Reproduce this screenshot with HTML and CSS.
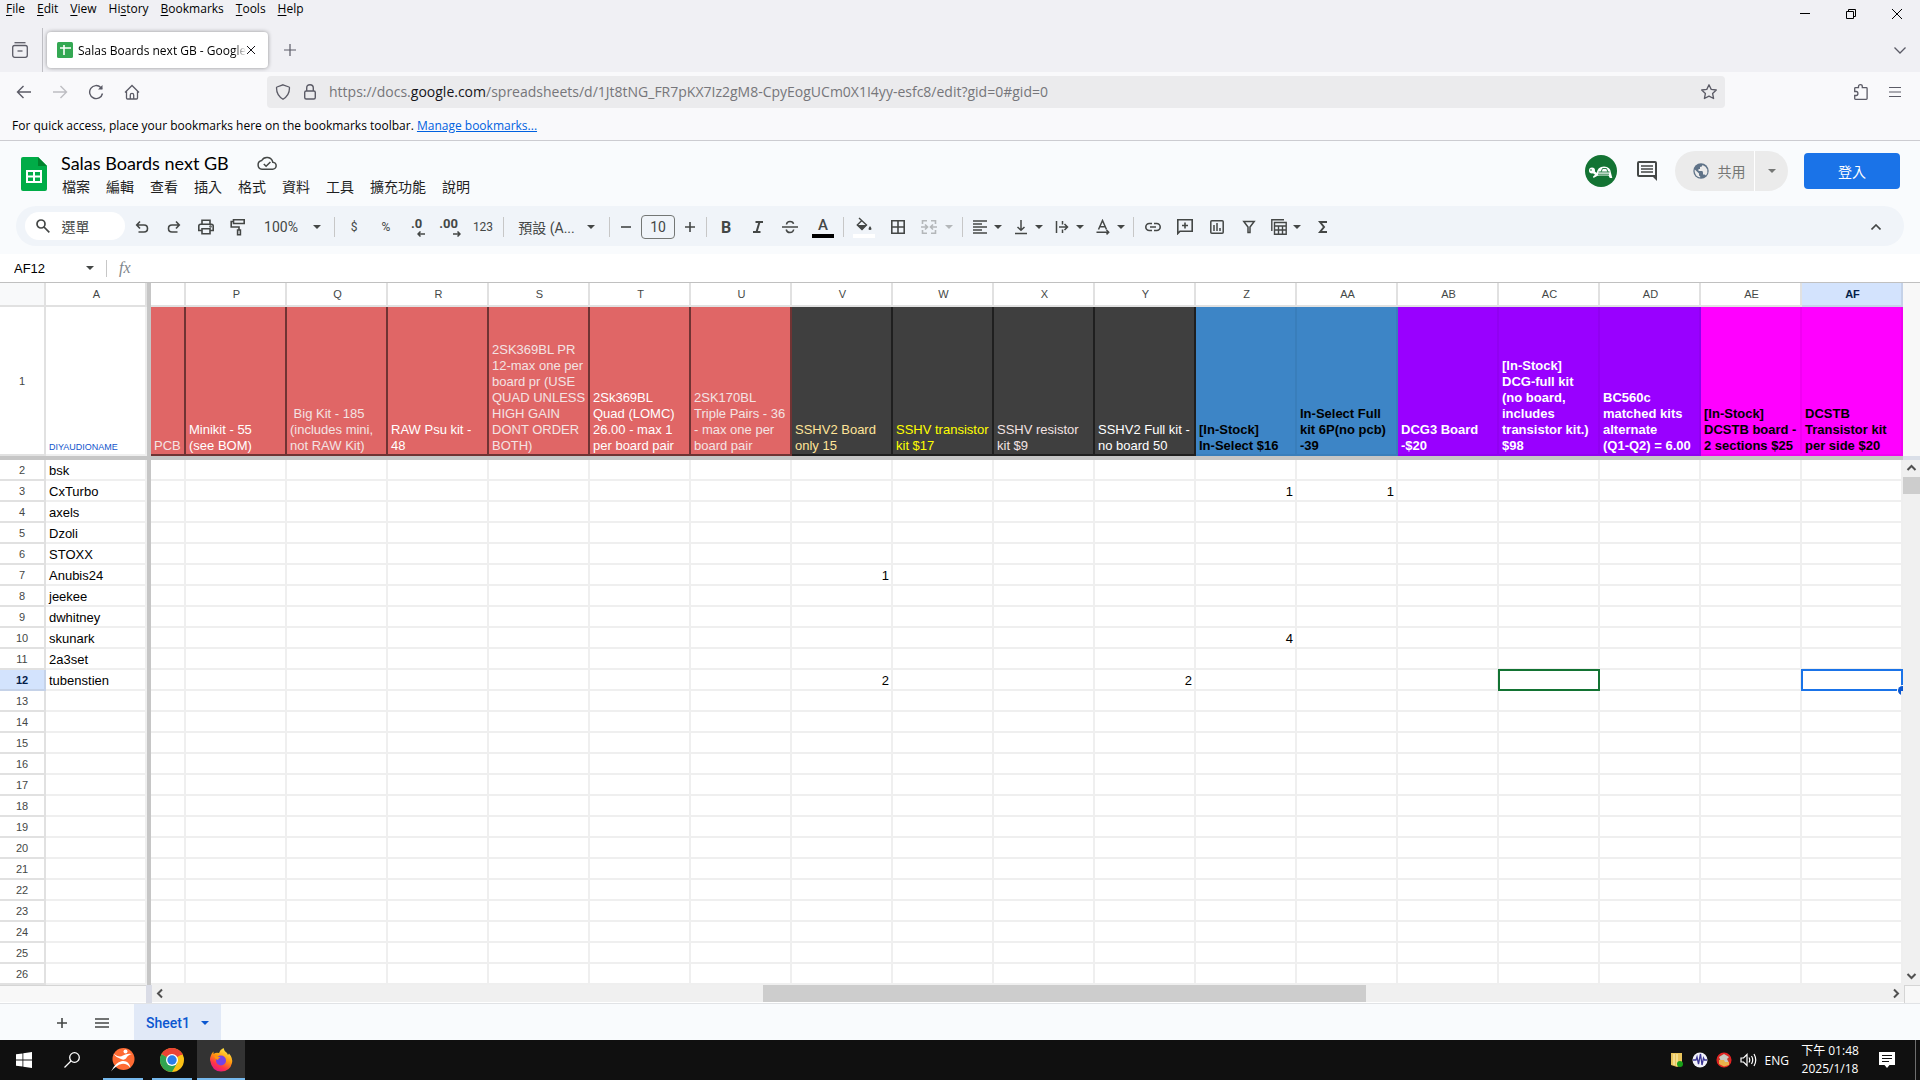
FILE: index.html
```
<!DOCTYPE html>
<html lang="zh-Hant">
<head>
  <meta charset="UTF-8" />
  <meta name="viewport" content="width=device-width, initial-scale=1.0" />
  <title>Salas Boards next GB - Google Sheets</title>
  <link rel="stylesheet" href="styles.css">
</head>
<body>
  <!-- browser chrome -->
  <div class="menubar">
    <button><u>F</u>ile</button>
    <button><u>E</u>dit</button>
    <button><u>V</u>iew</button>
    <button>Hi<u>s</u>tory</button>
    <button><u>B</u>ookmarks</button>
    <button><u>T</u>ools</button>
    <button><u>H</u>elp</button>
    <div class="window-buttons">
      <button aria-label="Minimize"><svg width="10" height="10" viewBox="0 0 10 10"><path d="M0 4.5h10" stroke="#000"/></svg></button>
      <button aria-label="Restore"><svg width="10" height="10" viewBox="0 0 10 10" fill="none" stroke="#000"><path d="M.5 2.5h7v7h-7zM2.5 2.500V.5h7v7h-2"/></svg></button>
      <button aria-label="Close"><svg width="10" height="10" viewBox="0 0 10 10"><path d="M0 0l10 10M10 0L0 10" stroke="#000"/></svg></button>
    </div>
  </div>

  <div class="tabstrip">
    <button class="recent" aria-label="View recent browsing"><svg width="16" height="16" viewBox="0 0 16 16" fill="none" stroke="#5b5b66" stroke-width="1.300"><path d="M2.500 .7h11"/><rect x=".7" y="3.500" width="14.600" height="11.800" rx="2"/><path d="M5.500 9h5"/></svg></button>
    <div class="browser-tab">
      <svg width="16" height="16" viewBox="0 0 16 16"><rect width="16" height="16" rx="1.500" fill="#34a853"/><path d="M3 6h11M7 3v10" stroke="#fff" stroke-width="1.600"/></svg>
      <span class="tab-title">Salas Boards next GB - Google</span>
      <button aria-label="Close tab"><svg width="8" height="8" viewBox="0 0 8 8"><path d="M0 0l8 8M8 0L0 8" stroke="#15141a"/></svg></button>
    </div>
    <button class="new-tab" aria-label="New tab"><svg width="12" height="12" viewBox="0 0 12 12"><path d="M6 0v12M0 6h12" stroke="#5b5b66" stroke-width="1.200"/></svg></button>
    <button class="all-tabs" aria-label="List all tabs"><svg width="12" height="7" viewBox="0 0 12 7" fill="none" stroke="#5b5b66" stroke-width="1.300"><path d="M.5.5L6 6 11.500.5"/></svg></button>
  </div>

  <div class="navbar">
    <button aria-label="Back"><svg width="16" height="16" viewBox="0 0 16 16" fill="none" stroke="#5b5b66" stroke-width="1.400"><path d="M15 8H1.500M7.500 2L1.500 8l6 6"/></svg></button>
    <button aria-label="Forward" disabled><svg width="16" height="16" viewBox="0 0 16 16" fill="none" stroke="#bdbdc2" stroke-width="1.400"><path d="M1 8h13.500M8.500 2l6 6-6 6"/></svg></button>
    <button aria-label="Reload"><svg width="16" height="16" viewBox="0 0 16 16" fill="none" stroke="#5b5b66" stroke-width="1.400"><path d="M14.500 9.500A6.500 6.500 0 1 1 12.800 3.500L14 4.700"/><path d="M14.500 1v4.500H10z" fill="#5b5b66" stroke="none"/></svg></button>
    <button aria-label="Home"><svg width="16" height="16" viewBox="0 0 16 16" fill="none" stroke="#5b5b66" stroke-width="1.300"><path d="M1 8.500L8 1.500l7 7M2.500 7.500V14q0 1 1 1h9q1 0 1-1V7.500M6.300 15v-4q0-1.700 1.700-1.700T9.700 11v4"/></svg></button>
    <div class="urlbar">
      <svg width="16" height="16" viewBox="0 0 16 16" fill="none" stroke="#5b5b66" stroke-width="1.300"><path d="M8 .8L14 3q.5.200.5.800Q14.500 11.500 8 15.200 1.500 11.500 1.500 3.800 1.500 3.200 2 3z"/></svg>
      <svg width="16" height="16" viewBox="0 0 16 16" fill="none" stroke="#5b5b66" stroke-width="1.400"><rect x="2.700" y="7" width="10.600" height="8" rx="1.500"/><path d="M4.700 7V4q0-3.300 3.300-3.300T11.300 4v3"/></svg>
      <div class="url" role="textbox" aria-label="Address">https://docs.<b>google.com</b>/spreadsheets/d/1Jt8tNG_FR7pKX7Iz2gM8-CpyEogUCm0X1I4yy-esfc8/edit?gid=0#gid=0</div>
      <svg width="16" height="16" viewBox="0 0 16 16" fill="none" stroke="#5b5b66" stroke-width="1.300" stroke-linejoin="round"><path d="M8 .8l2.200 4.600 5.100.6-3.700 3.500 1 5L8 12.100l-4.600 2.400 1-5L.7 6l5.100-.6z"/></svg>
    </div>
    <div class="nav-right">
      <button aria-label="Extensions"><svg width="16" height="16" viewBox="0 0 16 16" fill="none" stroke="#5b5b66" stroke-width="1.300"><path d="M1.700 7.500V4.500q0-.8.800-.8h3V2.500q0-1.800 1.900-1.800t1.900 1.800v1.200h4q.8 0 .8.800v10q0 .8-.8.800H2.500q-.8 0-.8-.8v-3h1.500q1.700 0 1.700-2t-1.700-2z"/></svg></button>
      <button aria-label="Open application menu"><svg width="12" height="10" viewBox="0 0 12 10" stroke="#5b5b66"><path d="M0 .5h12M0 5h12M0 9.500h12"/></svg></button>
    </div>
  </div>

  <div class="bookmarks">For quick access, place your bookmarks here on the bookmarks toolbar. <a href="#">Manage bookmarks...</a></div>

  <!-- document header -->
  <header class="doc-header">
    <svg class="doc-logo" width="26" height="36" viewBox="0 0 26 36"><path d="M2 1h15l9 9v23q0 2-2 2H2q-2 0-2-2V3q0-2 2-2z" fill="#00ac47"/><path d="M17 1l9 9h-9z" fill="#00832d"/><path d="M5 14h16v13H5zM7 16v3.500h5V16zm7 0v3.500h5V16zm-7 5.500V25h5v-3.500zm7 0V25h5v-3.500z" fill="#fff" fill-rule="evenodd"/></svg>
    <div class="doc-info">
      <div class="doc-title">
        <h1>Salas Boards next GB</h1>
        <svg width="20" height="16" viewBox="0 0 20 16" fill="none" stroke="#444746" stroke-width="1.500"><path d="M5 14.200h10.500a3.500 3.500 0 0 0 .3-7A6 6 0 0 0 4.700 5.500 4.400 4.400 0 0 0 5 14.200z"/><path d="M6.800 9l2.300 2.300 4.300-4.300"/></svg>
      </div>
      <nav class="doc-menu">
        <button>檔案</button><button>編輯</button><button>查看</button><button>插入</button><button>格式</button><button>資料</button><button>工具</button><button>擴充功能</button><button>說明</button>
      </nav>
    </div>
    <div class="doc-actions">
      <svg width="32" height="32" viewBox="0 0 32 32"><circle cx="16" cy="16" r="16" fill="#137333"/><circle cx="7" cy="15.500" r="3" fill="#fff"/><path d="M8 16.500l3 2.500h3" fill="none" stroke="#fff" stroke-width="2.400"/><path d="M11.500 18.500q1-7 7.500-7t7 6.500l1.300 5h-2.500L23.500 20.500H13L8.500 23l-.5-1.500z" fill="#fff"/><path d="M13.500 17h11M16 17l1.500-3.500h4L23 17M13 19.200h11" fill="none" stroke="#137333" stroke-width=".9"/><circle cx="6" cy="15" r=".8" fill="#137333"/></svg>
      <button class="comment" aria-label="Comments"><svg width="20" height="20" viewBox="0 0 20 20"><path d="M2 0h16q2 0 2 2v18l-4-4H2q-2 0-2-2V2q0-2 2-2zm0 2v12h16V2z" fill="#444746" fill-rule="evenodd"/><path d="M4 5h12M4 8h12M4 11h12" stroke="#444746" stroke-width="1.600"/></svg></button>
      <div class="share">
        <button class="share-main"><svg width="16" height="16" viewBox="0 0 16 16"><circle cx="8" cy="8" r="7.700" fill="#5f7388"/><path d="M9.500 2q0 2-2.500 2v2H5.500v2H9q1 0 1 2v1.500h1.500L13 12.500Q15 10 14.300 6.500 13 3 9.500 2zM1.800 6.500L6 10.500v1.500q0 1 1.200 1.200v1.300Q2 13.500 1.600 8z" fill="#ebebeb"/></svg>共用</button>
        <button class="share-more" aria-label="Share options"><i class="caret"></i></button>
      </div>
      <button class="signin">登入</button>
    </div>
  </header>

  <div class="toolbar-row">
    <div class="toolbar">
      <button class="search"><svg width="14" height="14" viewBox="0 0 14 14" fill="none" stroke="#444746" stroke-width="1.700"><circle cx="5" cy="5" r="4"/><path d="M8 8l5.300 5.300"/></svg>選單</button>
      <button class="tool" aria-label="Undo"><svg width="18" height="18" viewBox="0 0 18 18" fill="none" stroke="#444746" stroke-width="1.600"><path d="M7 3.500L3.700 7 7 10.500M4 7h7q3.500 0 3.500 3.500T11 14H5.500"/></svg></button>
      <button class="tool" aria-label="Redo"><svg width="18" height="18" viewBox="0 0 18 18" fill="none" stroke="#444746" stroke-width="1.600"><path d="M11 3.500L14.300 7 11 10.500M14 7H7q-3.500 0-3.500 3.500T7 14h5.500"/></svg></button>
      <button class="tool" aria-label="Print"><svg width="18" height="18" viewBox="0 0 18 18" fill="none" stroke="#444746" stroke-width="1.600"><path d="M5 6V2.300h8V6M5 12.500H1.800V8q0-1.800 1.800-1.800h10.800q1.800 0 1.800 1.800v4.500H13M5 10.800h8v5H5z"/><circle cx="13.500" cy="8.500" r=".5"/></svg></button>
      <button class="tool" aria-label="Paint format"><svg width="18" height="18" viewBox="0 0 18 18" fill="none" stroke="#444746" stroke-width="1.600"><path d="M4.500 1.800h10.700v3.700H4.500zM4.500 3.500H2.200V9H10v3M8.600 12h2.800v4.700H8.600z"/></svg></button>
      <button class="tool zoom">100%<i class="caret"></i></button>
      <span class="sep"></span>
      <button class="tool small">$</button>
      <button class="tool small">%</button>
      <button class="tool" aria-label="Decrease decimal places"><span class="dec">.0</span><svg class="dec-arrow" width="8" height="6" viewBox="0 0 8 6" fill="none" stroke="#444746" stroke-width="1.500"><path d="M8 3H1M3.500.5L1 3l2.500 2.500"/></svg></button>
      <button class="tool" aria-label="Increase decimal places"><span class="dec">.00</span><svg class="dec-arrow" width="8" height="6" viewBox="0 0 8 6" fill="none" stroke="#444746" stroke-width="1.500"><path d="M0 3h7M4.500.5L7 3 4.500 5.500"/></svg></button>
      <button class="tool wide small">123</button>
      <span class="sep"></span>
      <button class="tool font">預設 (A...<i class="caret"></i></button>
      <span class="sep"></span>
      <button class="tool step" aria-label="Decrease font size"><svg width="10" height="10" viewBox="0 0 10 10"><path d="M0 5h10" stroke="#444746" stroke-width="1.600"/></svg></button>
      <input class="font-size" type="text" value="10" aria-label="Font size">
      <button class="tool step" aria-label="Increase font size"><svg width="10" height="10" viewBox="0 0 10 10"><path d="M0 5h10M5 0v10" stroke="#444746" stroke-width="1.600"/></svg></button>
      <span class="sep"></span>
      <button class="tool bold">B</button>
      <button class="tool" aria-label="Italic"><svg width="12" height="12" viewBox="0 0 12 12"><path d="M3.500 1H11M1 11h7.500M7.500 1l-3 10" stroke="#444746" stroke-width="2"/></svg></button>
      <button class="tool" aria-label="Strikethrough"><svg width="16" height="16" viewBox="0 0 16 16" fill="none" stroke="#444746" stroke-width="1.500"><path d="M0 8h16M4.500 5.500Q4.800 2.500 8 2.500t3.500 2.300M4.200 10.500Q4.800 13.500 8 13.500t3.700-3"/></svg></button>
      <button class="tool wide" aria-label="Text color"><span class="swatch black">A</span></button>
      <span class="sep"></span>
      <button class="tool wide" aria-label="Fill color"><span class="swatch white"><svg width="16" height="15" viewBox="0 0 16 15"><path d="M3 1l7.500 7-4.500 4.500L1.300 8l4.500-4.500" fill="none" stroke="#444746" stroke-width="1.400"/><path d="M1.500 8h9L6 12.500zM14 9q3 4 0 4t0-4z" fill="#444746"/></svg></span></button>
      <button class="tool wide" aria-label="Borders"><svg width="14" height="14" viewBox="0 0 14 14" fill="none" stroke="#444746" stroke-width="1.600"><path d="M.8.8h12.400v12.400H.8zM7 .8v12.400M.8 7h12.400"/></svg></button>
      <button class="tool split faded" aria-label="Merge cells"><svg width="16" height="16" viewBox="0 0 16 16" fill="none" stroke="#b4b7ba" stroke-width="1.600"><path d="M6 1.800H1.500V5M10 1.800h4.500V5M6 14.200H1.500V11M10 14.200h4.500V11M0 8h6M4 5.500L6.500 8 4 10.500M16 8h-6M12 5.500L9.500 8l2.500 2.500"/></svg><i class="caret"></i></button>
      <span class="sep"></span>
      <button class="tool split" aria-label="Horizontal align"><svg width="16" height="16" viewBox="0 0 16 16" stroke="#444746" stroke-width="1.500"><path d="M1 2h14M1 5h9M1 8h14M1 11h9M1 14h14"/></svg><i class="caret"></i></button>
      <button class="tool split" aria-label="Vertical align"><svg width="16" height="16" viewBox="0 0 16 16" fill="none" stroke="#444746" stroke-width="1.500"><path d="M2 14.500h12M8 1v10M4.500 8L8 11.300 11.500 8"/></svg><i class="caret"></i></button>
      <button class="tool split" aria-label="Text wrapping"><svg width="16" height="16" viewBox="0 0 16 16" fill="none" stroke="#444746" stroke-width="1.500"><path d="M2.500 2v12M8.500 2v3.500M8.500 10.500V14M5 8h8M10.500 5l3 3-3 3"/></svg><i class="caret"></i></button>
      <button class="tool split" aria-label="Text rotation"><svg width="16" height="16" viewBox="0 0 16 16" fill="none" stroke="#444746" stroke-width="1.500"><path d="M3.500 10.500L7.500 1.500l4 9M5 7.800h5M1.500 13.200h12M11.500 11l2.200 2.200L11.500 15.400"/></svg><i class="caret"></i></button>
      <span class="sep"></span>
      <button class="tool" aria-label="Insert link"><svg width="16" height="16" viewBox="0 0 16 16" fill="none" stroke="#444746" stroke-width="1.600"><path d="M7 4.500H4.300a3.500 3.500 0 0 0 0 7H7M9 4.500h2.700a3.500 3.500 0 0 1 0 7H9M5 8h6"/></svg></button>
      <button class="tool" aria-label="Insert comment"><svg width="16" height="16" viewBox="0 0 16 16" fill="none" stroke="#444746" stroke-width="1.600"><path d="M.8 14.500V.8h14.400v11.400H3zM8 3.500v6M5 6.500h6"/></svg></button>
      <button class="tool" aria-label="Insert chart"><svg width="14" height="14" viewBox="0 0 14 14" fill="none" stroke="#444746" stroke-width="1.500"><rect x=".8" y=".8" width="12.400" height="12.400" rx="1"/><path d="M4 5v6M7 3v8M10 8v3"/></svg></button>
      <button class="tool" aria-label="Create a filter"><svg width="14" height="14" viewBox="0 0 14 14" fill="none" stroke="#444746" stroke-width="1.500"><path d="M1.800 1.500h10.400L8 7v5.500H6V7z"/></svg></button>
      <button class="tool split" aria-label="Table views"><svg width="16" height="16" viewBox="0 0 16 16" fill="none" stroke="#444746" stroke-width="1.400"><path d="M.8 12V.8H13M3.500 3.500h11.700v11.700H3.500zM3.500 7h11.700M3.500 11h11.700M7.500 7v8M11.500 7v8"/></svg><i class="caret"></i></button>
      <button class="tool wide" aria-label="Functions"><svg width="10" height="12" viewBox="0 0 10 12" fill="none" stroke="#444746" stroke-width="2"><path d="M9 1H2l4 5-4 5h7"/></svg></button>
      <button class="tool collapse" aria-label="Hide the menus"><svg width="10" height="6" viewBox="0 0 10 6" fill="none" stroke="#444746" stroke-width="1.600"><path d="M.5 5.500L5 1l4.500 4.500"/></svg></button>
    </div>
  </div>

  <div class="formula-bar">
    <input class="name-box" type="text" value="AF12" aria-label="Name box">
    <i class="caret"></i>
    <span class="sep"></span>
    <span class="fx">fx</span>
  </div>

  <!-- sheet grid -->
  <main class="grid">
    <div class="cells">
      <table>
        <colgroup><col class="col-num"><col class="col-a"><col class="col-freeze"><col class="col-o"></colgroup>
        <thead>
          <tr class="letters"><th class="corner"></th><th>A</th><th class="freeze"></th><th></th><th>P</th><th>Q</th><th>R</th><th>S</th><th>T</th><th>U</th><th>V</th><th>W</th><th>X</th><th>Y</th><th>Z</th><th>AA</th><th>AB</th><th>AC</th><th>AD</th><th>AE</th><th class="current">AF</th></tr>
        </thead>
        <tbody id="rows">
          <tr class="titles">
            <th>1</th>
            <td class="diy">DIYAUDIONAME</td>
            <td class="freeze"></td>
            <td class="red dim">PCB</td>
            <td class="red">Minikit - 55<br>(see BOM)</td>
            <td class="red dim">&nbsp;Big Kit - 185<br>(includes mini,<br>not RAW Kit)</td>
            <td class="red">RAW Psu kit -<br>48</td>
            <td class="red dim">2SK369BL PR<br>12-max one per<br>board pr (USE<br>QUAD UNLESS<br>HIGH GAIN<br>DONT ORDER<br>BOTH)</td>
            <td class="red">2Sk369BL<br>Quad (LOMC)<br>26.00 - max 1<br>per board pair</td>
            <td class="red dim">2SK170BL<br>Triple Pairs - 36<br>- max one per<br>board pair</td>
            <td class="dark cream">SSHV2 Board<br>only 15</td>
            <td class="dark yellow">SSHV transistor<br>kit $17</td>
            <td class="dark dim">SSHV resistor<br>kit $9</td>
            <td class="dark">SSHV2 Full kit -<br>no board 50</td>
            <td class="blue">[In-Stock]<br>In-Select $16</td>
            <td class="blue">In-Select Full<br>kit 6P(no pcb)<br>-39</td>
            <td class="purple">DCG3 Board<br>-$20</td>
            <td class="purple">[In-Stock]<br>DCG-full kit<br>(no board,<br>includes<br>transistor kit.)<br>$98</td>
            <td class="purple">BC560c<br>matched kits<br>alternate<br>(Q1-Q2) = 6.00</td>
            <td class="pink">[In-Stock]<br>DCSTB board -<br>2 sections $25</td>
            <td class="pink">DCSTB<br>Transistor kit<br>per side $20</td>
          </tr>
          <tr class="freeze-row"><td colspan="21"></td></tr>
        </tbody>
      </table>
    </div>
    <div class="vscroll">
      <div class="vscroll-top"></div>
      <div class="vscroll-freeze"></div>
      <svg width="17" height="17" viewBox="0 0 17 17" fill="none" stroke="#505050" stroke-width="2"><path d="M4.500 10l4-4 4 4"/></svg>
      <div class="vthumb"></div>
      <svg class="down" width="17" height="17" viewBox="0 0 17 17" fill="none" stroke="#505050" stroke-width="2"><path d="M4.500 6l4 4 4-4"/></svg>
    </div>
  </main>

  <div class="hscroll">
    <div class="hscroll-left"></div>
    <div class="hscroll-split"></div>
    <div class="htrack">
      <svg width="17" height="17" viewBox="0 0 17 17" fill="none" stroke="#505050" stroke-width="2"><path d="M10 4.500l-4 4 4 4"/></svg>
      <div class="hrail"><div class="hthumb"></div></div>
      <svg width="17" height="17" viewBox="0 0 17 17" fill="none" stroke="#505050" stroke-width="2"><path d="M7 4.500l4 4-4 4"/></svg>
    </div>
    <div class="hscroll-corner"></div>
  </div>

  <div class="sheet-tabs">
    <button aria-label="Add sheet"><svg width="10" height="10" viewBox="0 0 10 10"><path d="M0 5h10M5 0v10" stroke="#444746" stroke-width="1.600"/></svg></button>
    <button aria-label="All sheets"><svg width="14" height="10" viewBox="0 0 14 10" stroke="#444746" stroke-width="1.400"><path d="M0 1h14M0 5h14M0 9h14"/></svg></button>
    <button class="sheet-tab">Sheet1<i class="caret"></i></button>
  </div>

  <!-- desktop taskbar -->
  <footer class="taskbar">
    <button class="task" aria-label="Start"><svg width="16" height="16" viewBox="0 0 16 16" fill="#fff"><path d="M0 2.300L6.500 1.400V7.600H0zM7.300 1.300L16 0v7.600H7.300zM0 8.400h6.500v6.200L0 13.700zM7.300 8.400H16V16l-8.700-1.300z"/></svg></button>
    <button class="task" aria-label="Search"><svg width="16" height="16" viewBox="0 0 16 16" fill="none" stroke="#fff" stroke-width="1.300"><circle cx="10.500" cy="5.500" r="4.800"/><path d="M7 9L.5 15.500"/></svg></button>
    <div class="open-apps">
      <button class="task open" aria-label="Runner"><svg width="24" height="24" viewBox="0 0 24 24"><circle cx="12.500" cy="11" r="11" fill="#ff6b33"/><circle cx="14.500" cy="3.500" r="2" fill="#fff"/><path d="M2 5.500Q8 10 12 7.500T21 6q-4 .5-6 4.500-2 2-5 .5Q5 9.500 2 5.500zM0 23.500q4-9 11-10.500 7-1 8.500 7-4-5-9-4T0 23.500z" fill="#fff"/></svg></button>
      <button class="task open" aria-label="Chrome"><svg width="24" height="24" viewBox="0 0 24 24"><circle cx="12" cy="12" r="12" fill="#fbc116"/><path d="M12 12L1.600 6A12 12 0 0 0 12 24l5.200-9z" fill="#31a350"/><path d="M12 12L1.600 6A12 12 0 0 1 22.400 6z" fill="#ea4335"/><path d="M12 6h10.400v1H12z" fill="#ea4335"/><circle cx="12" cy="12" r="6" fill="#fff"/><circle cx="12" cy="12" r="4.700" fill="#2b7de9"/></svg></button>
      <button class="task open active" aria-label="Firefox"><svg width="24" height="24" viewBox="0 0 24 24"><defs><linearGradient id="fox" x1=".8" y1="0" x2=".3" y2="1"><stop offset="0" stop-color="#fff44f"/><stop offset=".45" stop-color="#ff980e"/><stop offset=".75" stop-color="#ff3647"/><stop offset="1" stop-color="#e31587"/></linearGradient></defs><path d="M1 12Q1 7 4.500 3.500V6Q7 4 10 5q1-3.500 4.500-5Q15 3 18 5q.5 1 1 2l1-1.500Q24 10 23 15 21 23.500 12 23.500T1 12z" fill="url(#fox)"/><circle cx="12" cy="12.500" r="5" fill="#7542e5"/><path d="M5 8q4 0 6.500 1.500Q9 10 9 12q-3-1-4-4z" fill="#ff980e"/></svg></button>
    </div>
    <div class="tray">
      <svg width="14" height="16" viewBox="0 0 14 16"><path d="M1 1h11v12l-5 2-6-2z" fill="#e9c45c"/><path d="M4 2v11M7 2v12" stroke="#fff3bd"/><circle cx="10" cy="12" r="3" fill="#18a018"/></svg>
      <svg width="16" height="16" viewBox="0 0 16 16"><circle cx="8" cy="8" r="7.500" fill="#f2f2fa"/><path d="M1 8h3l1-3 1.500 7L8.500 2l1.500 11 1.500-7 1 2H15" fill="none" stroke="#3b3694" stroke-width="1.300"/></svg>
      <svg width="16" height="16" viewBox="0 0 16 16"><circle cx="8" cy="8" r="6.700" fill="#c0392b" stroke="#e32222" stroke-width="1.700"/><path d="M3 5l5-3 5 3-2 2 2 4H5l-1-4z" fill="#c9c9c0"/><path d="M3 8h5l1 2h4v3l-5 1.500L3 12z" fill="#e8b04a"/></svg>
      <svg width="17" height="14" viewBox="0 0 17 14" fill="none" stroke="#fff" stroke-width="1.200"><path d="M1 5h2.500L7 1.500v11L3.500 9H1zM9 4.500q1.500 2.500 0 5M11.500 3q2.500 4 0 8M14 1q3.500 6 0 12"/></svg>
      <span class="lang">ENG</span>
      <div class="clock">下午 01:48<br>2025/1/18</div>
      <svg class="notice" width="16" height="16" viewBox="0 0 16 16"><path d="M0 0h16v13h-5.500L8 16l-2.500-3H0z" fill="#fff"/><path d="M3 3.500h10M3 6.500h10M3 9.500h7" stroke="#101010"/></svg>
    </div>
    <button class="show-desktop" aria-label="Show desktop"></button>
  </footer>

  <script>
    const names = ['bsk', 'CxTurbo', 'axels', 'Dzoli', 'STOXX', 'Anubis24', 'jeekee', 'dwhitney', 'skunark', '2a3set', 'tubenstien'];
    const cols = ['O', 'P', 'Q', 'R', 'S', 'T', 'U', 'V', 'W', 'X', 'Y', 'Z', 'AA', 'AB', 'AC', 'AD', 'AE', 'AF'];
    const orders = { Z3: 1, AA3: 1, V7: 1, Z10: 4, V12: 2, Y12: 2 };
    const tbody = document.getElementById('rows');

    for (let r = 2; r <= 26; r++) {
      const tr = document.createElement('tr');
      let html = `<th${r === 12 ? ' class="current"' : ''}>${r}</th><td>${names[r - 2] || ''}</td><td class="freeze"></td>`;
      cols.forEach(c => {
        const id = c + r;
        let mark = '';
        if (id === 'AC12') mark = '<div class="cursor other"></div>';
        if (id === 'AF12') mark = '<div class="cursor own"></div>';
        html += `<td class="num">${orders[id] || ''}${mark}</td>`;
      });
      tr.innerHTML = html;
      tbody.appendChild(tr);
    }
  </script>
</body>
</html>
```

FILE: styles.css
```
* { box-sizing: border-box; }
body {
  margin: 0;
  min-height: 100vh;
  display: flex;
  flex-direction: column;
  overflow: hidden;
  background: #fff;
  color: #000;
  font-family: "Liberation Sans", "Noto Sans CJK TC", sans-serif;
  font-size: 13px;
}
button {
  border: 0;
  padding: 0;
  background: none;
  color: inherit;
  font: inherit;
  display: flex;
  align-items: center;
  justify-content: center;
}
svg { display: block; flex-shrink: 0; }
.caret {
  border: 4px solid transparent;
  border-top-color: #444746;
  border-bottom: 0;
  flex-shrink: 0;
}

/* browser chrome */
.menubar, .tabstrip, .navbar, .bookmarks, .taskbar { font-family: "Open Sans", "Noto Sans CJK TC", sans-serif; }
.menubar {
  display: flex;
  align-items: flex-start;
  gap: 12px;
  height: 28px;
  padding-left: 6px;
  background: #f0f0f4;
  font-size: 12px;
  line-height: 18px;
}
.menubar u { text-underline-offset: 2px; }
.window-buttons { display: flex; margin-left: auto; }
.window-buttons button { width: 46px; height: 28px; }
.tabstrip {
  display: flex;
  align-items: center;
  height: 44px;
  background: #f0f0f4;
  font-size: 12px;
}
.recent { width: 43px; height: 44px; padding-right: 2px; border-right: 1px solid #bfbfc4; }
.browser-tab {
  display: flex;
  align-items: center;
  width: 221px;
  height: 36px;
  margin-left: 4px;
  padding: 0 13px 0 10px;
  border-radius: 4px;
  background: #fff;
  box-shadow: 0 0 4px rgba(0, 0, 0, .4);
}
.tab-title {
  flex: 1;
  margin: 0 1px 0 5px;
  overflow: hidden;
  white-space: nowrap;
  mask-image: linear-gradient(to left, transparent, #000 12px);
}
.new-tab { margin-left: 16px; }
.all-tabs { margin: 0 14px 0 auto; }
.navbar {
  display: flex;
  align-items: center;
  height: 40px;
  padding-left: 6px;
  background: #f9f9fb;
}
.navbar > button { width: 36px; height: 36px; }
.urlbar {
  flex: 1;
  display: flex;
  align-items: center;
  gap: 11px;
  height: 32px;
  margin-left: 117px;
  padding: 0 8px;
  border-radius: 4px;
  background: #ebebed;
}
.url { flex: 1; padding-bottom: 2px; color: #76767a; font-size: 14px; white-space: nowrap; }
.url b { color: #15141a; font-weight: 400; }
.nav-right { display: flex; gap: 20px; width: 195px; justify-content: flex-end; padding-right: 19px; }
.bookmarks {
  height: 29px;
  padding-left: 12px;
  border-bottom: 1px solid #ccccd1;
  background: #f9f9fb;
  font-size: 12px;
  line-height: 28px;
}
.bookmarks a { color: #0061e0; }

/* document header */
.doc-header {
  display: flex;
  height: 65px;
  padding: 10px 20px 0 21px;
  background: #f9fbfd;
}
.doc-logo { margin-top: 5px; }
.doc-info { margin-left: 14px; }
.doc-title { display: flex; align-items: center; gap: 28px; height: 24px; }
.doc-title h1 {
  margin: 0;
  font-family: Lato, sans-serif;
  font-size: 18px;
  font-weight: 400;
}
.doc-menu { display: flex; gap: 16px; padding-left: 1px; font-size: 14px; line-height: 24px; color: #1f1f1f; }
.doc-actions { display: flex; align-items: center; height: 40px; margin-left: auto; }
.comment { width: 40px; height: 40px; margin: 0 8px 0 10px; }
.share { display: flex; width: 113px; height: 40px; border-radius: 20px; background: #ebebeb; color: #757775; font-size: 14px; }
.share-main { width: 80px; gap: 9px; padding-left: 9px; border-right: 1px solid #fff; }
.share-more { flex: 1; }
.share .caret { border-top-color: #757775; }
.signin { width: 96px; height: 36px; margin-left: 16px; border-radius: 4px; background: #1a73e8; color: #fff; font-size: 14px; }

.toolbar-row { padding: 0 16px 8px; background: #f9fbfd; }
.toolbar {
  display: flex;
  align-items: center;
  height: 40px;
  padding: 2px 0 0 9px;
  border-radius: 20px;
  background: #f0f4f9;
  color: #444746;
  font-family: Roboto, "Noto Sans CJK TC", sans-serif;
  font-size: 14px;
}
.search { width: 100px; height: 28px; margin: 0 1px 2px 0; padding-right: 25px; gap: 12px; border-radius: 14px; background: #fff; }
.tool { width: 32px; height: 32px; flex-shrink: 0; }
.tool.small { font-size: 12px; }
.tool.wide { width: 34px; }
.tool.step { width: 26px; }
.tool.split { width: 41px; gap: 6px; }
.tool.zoom { width: 77px; gap: 15px; }
.tool.font { width: 99px; gap: 12px; }
.tool.bold { font-size: 16px; font-weight: 700; }
.tool.faded { width: 44px; gap: 8px; }
.tool.faded .caret { border-top-color: #b4b7ba; }
.tool.collapse { margin-left: auto; margin-right: 12px; }
.sep { width: 1px; height: 20px; margin: 0 3px; background: #c7c7c7; flex-shrink: 0; }
.dec { font-size: 13px; font-weight: 700; padding-bottom: 8px; }
.dec-arrow { align-self: flex-end; margin: 0 0 6px -5px; }
.font-size {
  width: 34px;
  height: 24px;
  margin: 0 2px;
  padding: 0;
  border: 1px solid #747775;
  border-radius: 4px;
  background: none;
  color: #444746;
  font: 14px Roboto, sans-serif;
  text-align: center;
}
.swatch { display: flex; flex-direction: column; align-items: center; width: 22px; height: 21px; border-bottom: 4px solid; font-size: 15px; line-height: 17px; font-weight: 500; }
.swatch.black { border-color: #000; }
.swatch.white { border-color: #fff; }

.formula-bar {
  display: flex;
  align-items: center;
  height: 29px;
  border-bottom: 1px solid #c0c0c0;
}
.name-box { width: 72px; margin: 0 0 0 14px; padding: 0; border: 0; font: 13px "Liberation Sans", sans-serif; }
.formula-bar .sep { height: 17px; margin: 0 12px; }
.fx { color: #80868b; font: italic 16px "Liberation Serif", serif; }

/* grid */
.grid { display: flex; }
.cells { flex: 1; min-width: 0; overflow: hidden; }
table {
  width: 100%;
  table-layout: fixed;
  border-spacing: 0;
}
.col-num { width: 46px; }
.col-a { width: 101px; }
.col-freeze { width: 4px; }
.col-o { width: 35px; }
td, th {
  position: relative;
  height: 21px;
  padding: 0 3px;
  border: solid #efefef;
  border-width: 0 2px 2px 0;
  line-height: 16px;
  vertical-align: bottom;
  white-space: nowrap;
}
th {
  padding: 0;
  border-color: #e1e1e1;
  color: #444746;
  font-size: 11px;
  font-weight: 400;
  text-align: center;
  vertical-align: middle;
}
th.current { background: #d3e3fd; border-color: #c5d2e8; color: #041e49; font-weight: 700; }
.letters th { height: 24px; padding-left: 2px; }
.letters .corner { background: #f8f9fa; }
.letters .freeze, td.freeze { padding: 0; border: 0; background: #c6c6c6; }
.num { padding-right: 2px; text-align: right; }
.titles td { height: 149px; overflow: hidden; }
.titles .diy { color: #1155cc; font-size: 9px; line-height: 14px; }
.titles .red { background: #e06666; border-color: rgba(0, 0, 0, .5); color: #fff; }
.titles .dark { background: #3f3f3f; border-color: rgba(0, 0, 0, .5); color: #fff; }
.titles .dim { color: #f3e3e3; }
.titles .cream { color: #ffe599; }
.titles .yellow { color: #ff0; }
.titles .blue, .titles .purple, .titles .pink { border-color: rgba(0, 0, 0, .05); font-weight: 700; }
.titles .blue { background: #3d85c6; }
.titles .purple { background: #90f; color: #fff; }
.titles .pink { background: #f0f; }
.freeze-row td { height: 4px; padding: 0; border: 0; background: #c6c6c6; line-height: 0; }
.cursor { position: absolute; inset: -1px -2px -2px -1px; border: 2px solid #137333; }
.cursor.own { border-color: #1a73e8; }
.cursor.own::after {
  content: "";
  position: absolute;
  right: -6px;
  bottom: -6px;
  width: 9px;
  height: 9px;
  border-radius: 50%;
  background: #0b57d0;
  box-shadow: 0 0 0 1px #fff;
}
.vscroll { display: flex; flex-direction: column; width: 17px; background: #f0f0f0; }
.vscroll-top { height: 173px; background: #f8f8f8; }
.vscroll-freeze { height: 4px; background: #dadfe8; }
.vthumb { height: 17px; background: #cdcdcd; }
.down { margin-top: auto; }

.hscroll { display: flex; height: 19px; border-bottom: 1px solid #e1e3e6; }
.hscroll-left { width: 146px; background: #f8f8f8; border-top: 1px solid #d5d5d5; border-bottom: 1px solid #fff; }
.hscroll-split { width: 6px; background: #dadce6; }
.htrack { flex: 1; display: flex; align-items: center; height: 17px; background: #f0f0f0; }
.hrail { flex: 1; height: 17px; }
.hthumb { width: 35.1%; height: 17px; margin-left: 34.6%; background: #cdcdcd; }
.hscroll-corner { width: 16px; border-left: 1px solid #d5d5d5; border-top: 1px solid #d5d5d5; background: #f8f8f8; }

.sheet-tabs { display: flex; height: 36px; padding-left: 42px; background: #f9fbfd; }
.sheet-tabs button { width: 40px; height: 36px; padding-top: 2px; }
.sheet-tabs .sheet-tab { width: 87px; margin-left: 12px; gap: 11px; background: #e1e9f7; color: #0b57d0; font: 500 14px Roboto, sans-serif; }
.sheet-tab .caret { border-top-color: #0b57d0; }

/* taskbar */
.taskbar { display: flex; height: 40px; background: #101010; color: #fff; font-size: 12px; }
.task { width: 48px; height: 40px; }
.open-apps { display: flex; gap: 1px; margin-left: 3px; }
.task.open { background: linear-gradient(#76b9ed, #76b9ed) center bottom / 40px 2px no-repeat; }
.task.active { background-color: #333; background-size: 48px 2px; }
.tray { display: flex; align-items: center; gap: 8px; margin-left: auto; padding-right: 20px; }
.clock { width: 66px; line-height: 18px; text-align: center; }
.notice { margin-left: 8px; }
.show-desktop { width: 5px; height: 40px; border-left: 1px solid #6e6e6e; }
```
